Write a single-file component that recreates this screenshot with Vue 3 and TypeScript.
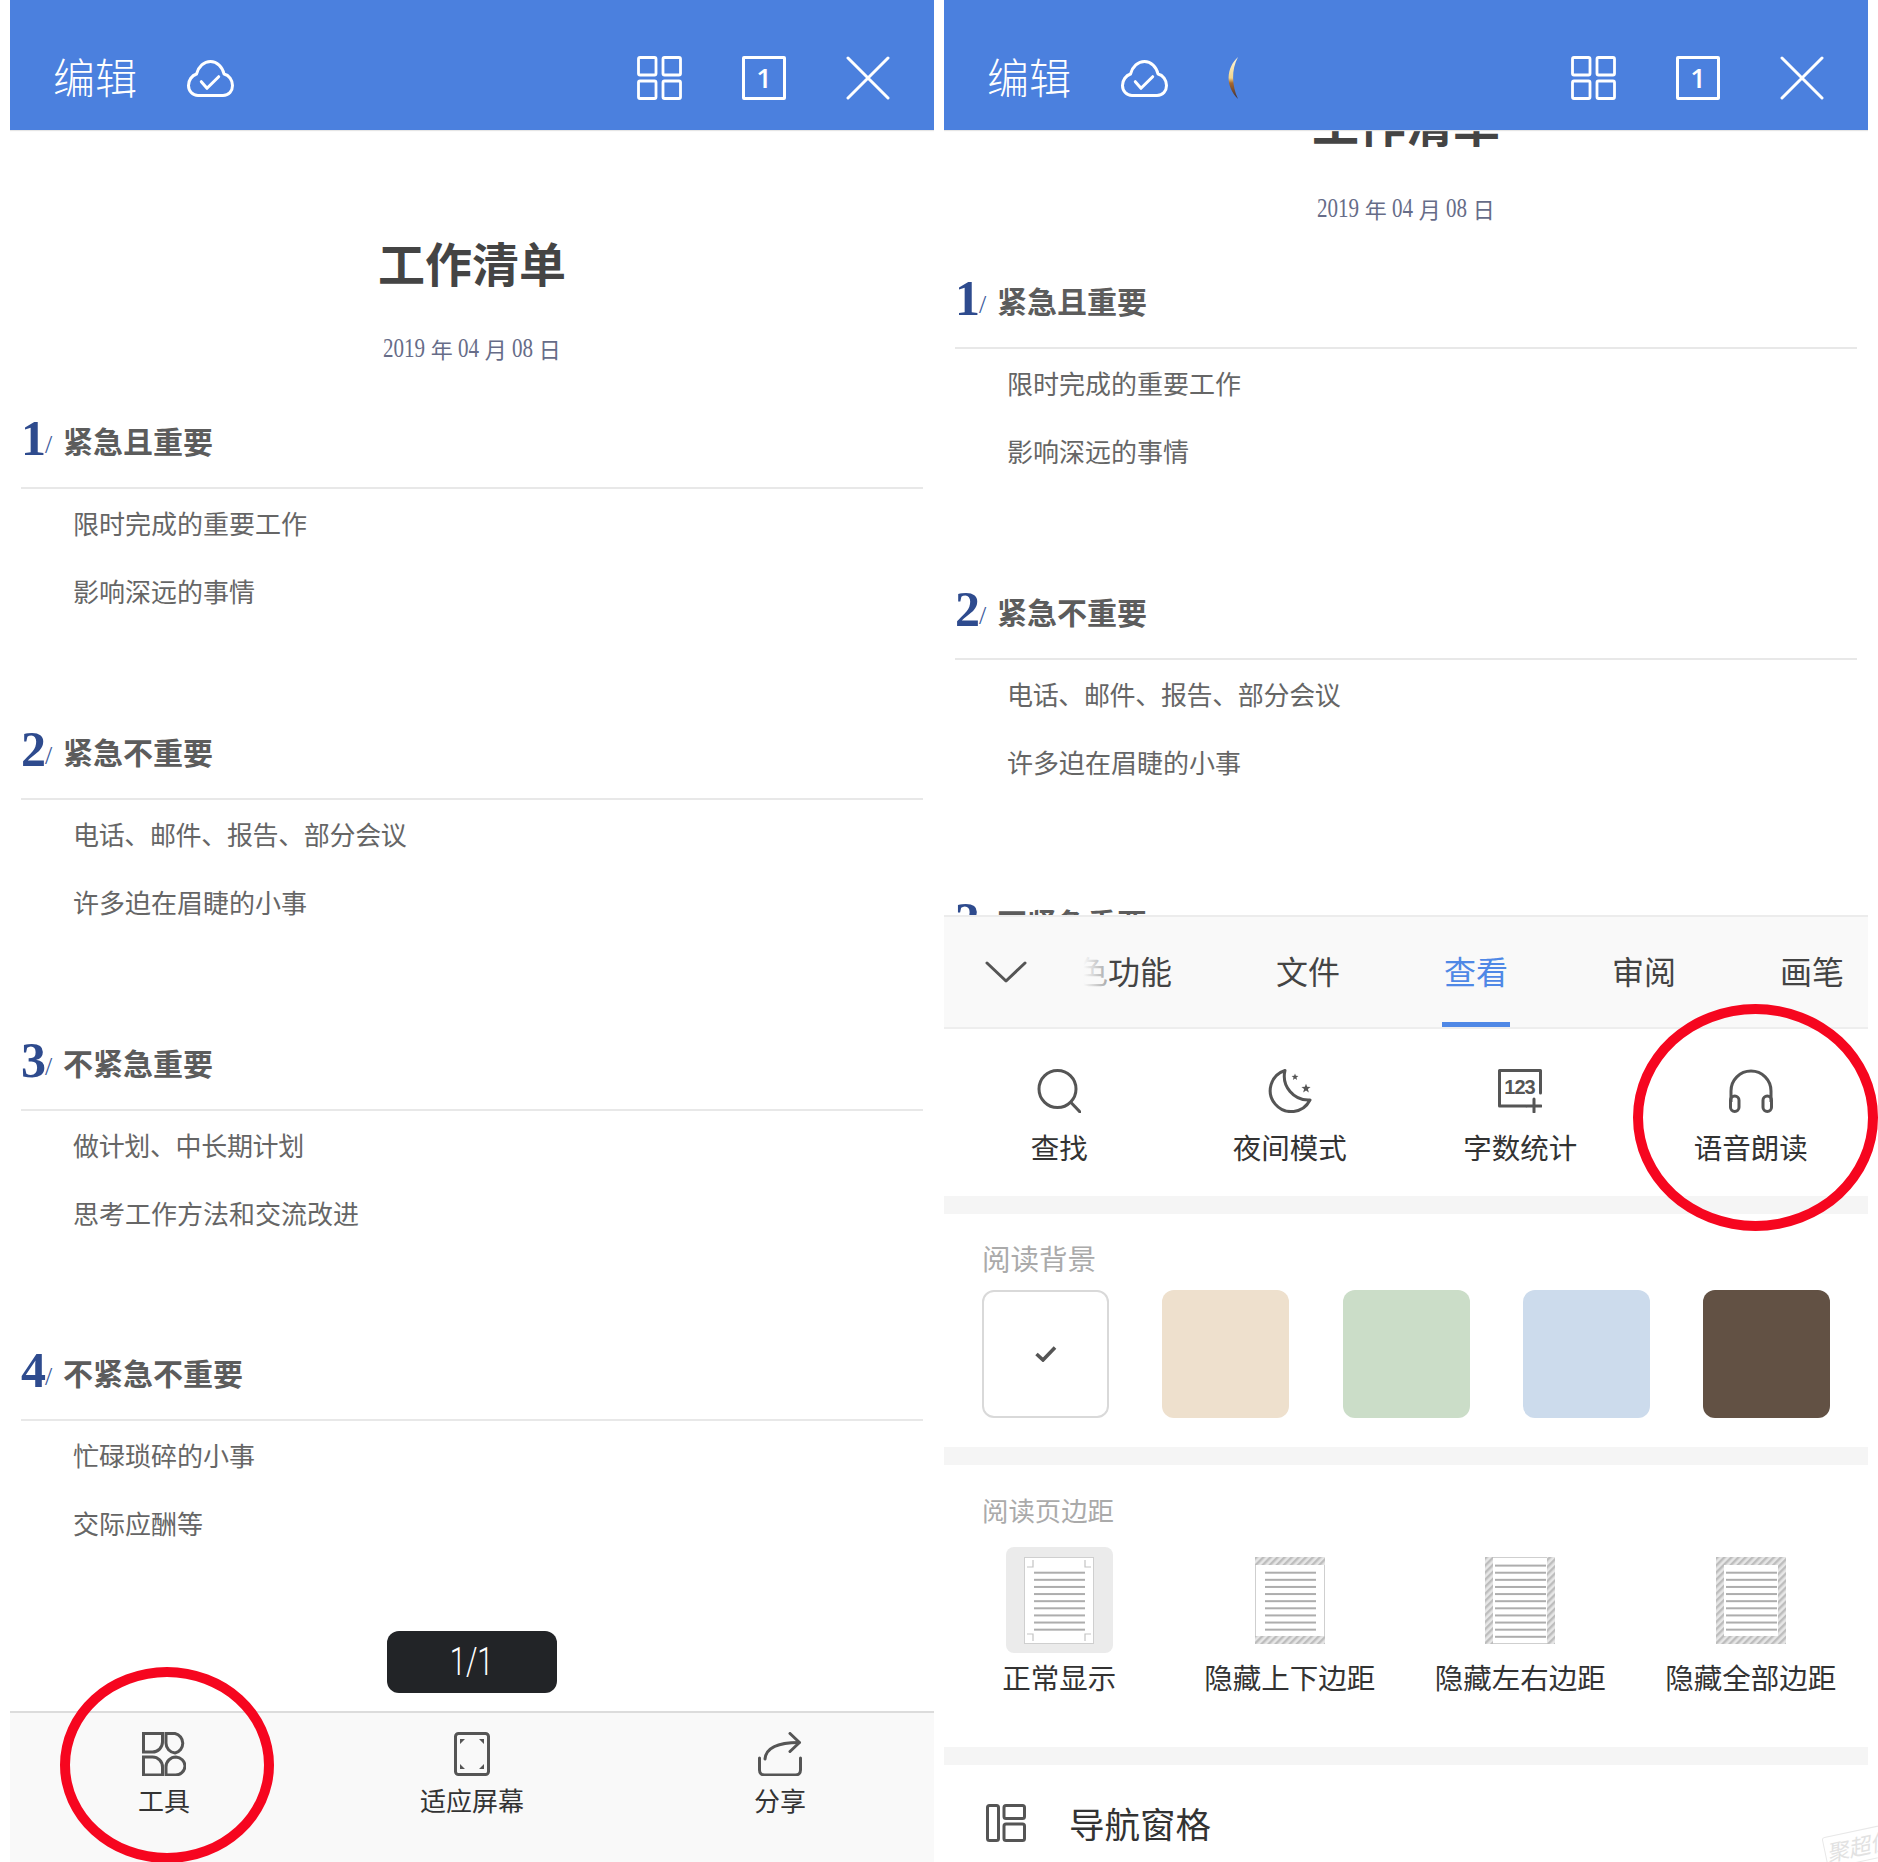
<script setup lang="ts">
type Section = { num: string; title: string; items: string[] };

const sides = ['left', 'right'] as const;

const sections: Section[] = [
  { num: '1', title: '紧急且重要', items: ['限时完成的重要工作', '影响深远的事情'] },
  { num: '2', title: '紧急不重要', items: ['电话、邮件、报告、部分会议', '许多迫在眉睫的小事'] },
  { num: '3', title: '不紧急重要', items: ['做计划、中长期计划', '思考工作方法和交流改进'] },
  { num: '4', title: '不紧急不重要', items: ['忙碌琐碎的小事', '交际应酬等'] },
];

const tabs = ['特色功能', '文件', '查看', '审阅', '画笔'];
const swatches = ['#ffffff', '#eee0cd', '#cbddc8', '#ccdbec', '#625144'];

function star(cx: number, cy: number, r: number): string {
  const pts: string[] = [];
  for (let i = 0; i < 10; i++) {
    const rad = i % 2 === 0 ? r : r * 0.42;
    const a = -Math.PI / 2 + (i * Math.PI) / 5;
    pts.push(`${(cx + rad * Math.cos(a)).toFixed(2)},${(cy + rad * Math.sin(a)).toFixed(2)}`);
  }
  return pts.join(' ');
}

type Margin = { label: string; kind: string; lineCount: number; lineStart: number };
const margins: Margin[] = [
  { label: '正常显示', kind: 'normal', lineCount: 9, lineStart: 14.7 },
  { label: '隐藏上下边距', kind: 'tb', lineCount: 9, lineStart: 14.7 },
  { label: '隐藏左右边距', kind: 'lr', lineCount: 11, lineStart: 7.6 },
  { label: '隐藏全部边距', kind: 'all', lineCount: 9, lineStart: 14.7 },
];
const lineY = (m: Margin, i: number) => m.lineStart + i * 7.12;
</script>

<template>
  <div class="page">
    <section v-for="side in sides" :key="side" class="phone">
      <header class="topbar">
        <div class="topbar-left">
          <span class="edit">编辑</span>
          <svg class="cloud" width="47" height="37" viewBox="0 0 47 37" fill="none" stroke="#fff" stroke-width="3" stroke-linejoin="round" stroke-linecap="round">
            <path d="M11 35.5H36C42 35.5 45.5 31 45.5 25.5C45.5 20 42 15 37 14C35.5 7 30 1.5 23.5 1.5C17 1.5 11.5 6.5 9.5 14C5 15.5 1.5 20 1.5 25.5C1.5 31 5.5 35.5 11 35.5Z" />
            <path d="M14.3 21.7L20 28.3L31.7 16.7" stroke-width="3" />
          </svg>
        </div>
        <svg v-if="side === 'right'" class="crescent" width="14" height="44" viewBox="0 0 14 44">
          <defs>
            <linearGradient id="crescent-fill" x1="0" y1="0" x2="0" y2="1">
              <stop offset="0" stop-color="#fff8dc" />
              <stop offset="0.5" stop-color="#f2d58c" />
              <stop offset="0.62" stop-color="#a8672c" />
              <stop offset="1" stop-color="#3b2f3a" />
            </linearGradient>
          </defs>
          <path d="M13 1C1 12 0 30 13 43C7 30 6 14 13 1Z" fill="url(#crescent-fill)" />
        </svg>
        <div class="topbar-right">
          <svg width="45" height="44" viewBox="0 0 45 44" fill="none" stroke="#fff" stroke-width="2.8" stroke-linejoin="round">
            <rect x="1.5" y="1.5" width="17.5" height="17.5" rx="1.5" />
            <rect x="26" y="1.5" width="17.5" height="17.5" rx="1.5" />
            <rect x="1.5" y="25" width="17.5" height="17.5" rx="1.5" />
            <rect x="26" y="25" width="17.5" height="17.5" rx="1.5" />
          </svg>
          <div class="page-box">1</div>
          <svg width="44" height="44" viewBox="0 0 44 44" fill="none" stroke="#fff" stroke-width="3" stroke-linecap="round">
            <path d="M2 2L42 42M42 2L2 42" />
          </svg>
        </div>
      </header>

      <main class="doc" :class="{ 'doc-scrolled': side === 'right' }">
        <div class="doc-inner">
          <h1 class="doc-title">工作清单</h1>
          <p class="doc-date">
            <span class="d4">2019</span><span>年</span><span class="d2">04</span><span>月</span><span class="d2">08</span><span>日</span>
          </p>
          <article v-for="s in sections" :key="s.num" class="sec">
            <h2 class="sec-head">
              <span class="sec-num">{{ s.num }}</span><span class="sec-slash">/</span>
              <span class="sec-title">{{ s.title }}</span>
            </h2>
            <p
              v-for="item in s.items"
              :key="item"
              class="sec-item"
              :class="{ 'sec-item-tight': item.includes('、') }"
            >{{ item }}</p>
          </article>
        </div>
      </main>

      <template v-if="side === 'left'">
        <div class="pager"><span>1/1</span></div>
        <footer class="bottombar">
          <div class="bar-item">
            <svg width="44" height="44" viewBox="0 0 44 44" fill="none" stroke="#555" stroke-width="3" stroke-linejoin="miter">
              <path d="M1.5 1.5H20.5V10A10 10 0 0 1 10.5 20H1.5Z" />
              <path d="M24 1.5H33A10 10 0 0 1 33 21A10 10 0 0 1 24 11Z" />
              <path d="M1.5 25H10.5A10 10 0 0 1 20.5 35V43H1.5Z" />
              <path d="M24 43V35A10 10 0 0 1 34 25A9.5 9.5 0 0 1 43 34A9.5 9.5 0 0 1 33 43Z" />
            </svg>
            <span>工具</span>
          </div>
          <div class="bar-item">
            <svg width="36" height="44" viewBox="0 0 36 44" fill="none">
              <rect x="1.5" y="1.5" width="33" height="41" rx="3" stroke="#555" stroke-width="3" />
              <path d="M6 7H11L6 12ZM30 7H25L30 12ZM6 37H11L6 32ZM30 37H25L30 32Z" fill="#555" />
            </svg>
            <span>适应屏幕</span>
          </div>
          <div class="bar-item">
            <svg width="44" height="44" viewBox="0 0 44 44" fill="none" stroke="#555" stroke-width="3" stroke-linecap="round" stroke-linejoin="round">
              <path d="M1.5 26V38C1.5 41 3.5 43 6.5 43H37.5C40.5 43 42.5 41 42.5 38V26" />
              <path d="M7 27C8 16 18 10.5 41 10.5" />
              <path d="M32 1.5L41.5 10.5L32 19.5" />
            </svg>
            <span>分享</span>
          </div>
        </footer>
      </template>

      <aside v-else class="panel">
        <div class="tabbar">
          <div class="chevron">
            <svg width="42" height="22" viewBox="0 0 42 22" fill="none" stroke="#555" stroke-width="3" stroke-linecap="round" stroke-linejoin="round">
              <path d="M2 2L21 20L40 2" />
            </svg>
          </div>
          <div class="tab-scroll">
            <div class="tab-row">
              <span v-for="t in tabs" :key="t" class="tab" :class="{ 'tab-active': t === '查看' }">{{ t }}</span>
            </div>
            <div class="tab-fade"></div>
          </div>
        </div>

        <div class="quick">
          <div class="tool">
            <svg width="44" height="44" viewBox="0 0 44 44" fill="none" stroke="#555" stroke-width="3" stroke-linecap="round">
              <circle cx="20.5" cy="20" r="18.5" />
              <path d="M34 33.5L43 43" />
            </svg>
            <span>查找</span>
          </div>
          <div class="tool">
            <svg width="44" height="44" viewBox="0 0 44 44" fill="none" stroke="#555" stroke-width="3" stroke-linejoin="round">
              <path d="M17 1.5A21 21 0 1 0 42 31A24 24 0 0 1 17 1.5Z" />
              <polygon :points="star(27, 8, 3.6)" fill="#555" stroke="none" />
              <polygon :points="star(38, 19.5, 4.8)" fill="#555" stroke="none" />
            </svg>
            <span>夜间模式</span>
          </div>
          <div class="tool">
            <svg width="44" height="44" viewBox="0 0 44 44" fill="none" stroke="#555" stroke-width="3" stroke-linecap="round" stroke-linejoin="round">
              <path d="M42.5 24V1.5H1.5V37H28" />
              <path d="M36 30V43M29 37H43" />
              <text x="21.5" y="25" text-anchor="middle" class="count-text">123</text>
            </svg>
            <span>字数统计</span>
          </div>
          <div class="tool">
            <svg width="44" height="44" viewBox="0 0 44 44" fill="none" stroke="#555" stroke-width="3">
              <path d="M2 33V22A20 20 0 0 1 42 22V33" />
              <rect x="1.5" y="27" width="8.5" height="15.5" rx="4.25" />
              <rect x="34" y="27" width="8.5" height="15.5" rx="4.25" />
            </svg>
            <span>语音朗读</span>
          </div>
        </div>

        <div class="band"></div>

        <div class="bg-block">
          <div class="bg-label">阅读背景</div>
          <div class="swatches">
            <div
              v-for="(c, i) in swatches"
              :key="c"
              class="swatch"
              :class="{ 'swatch-on': i === 0 }"
              :style="{ background: c }"
            >
              <svg v-if="i === 0" width="22" height="16" viewBox="0 0 22 16" fill="none" stroke="#555" stroke-width="3.6">
                <path d="M1.5 8L8 14L20 1.5" />
              </svg>
            </div>
          </div>
        </div>

        <div class="band"></div>

        <div class="margin-block">
          <div class="margin-label">阅读页边距</div>
          <div class="margin-grid">
            <div v-for="m in margins" :key="m.kind" class="margin-item">
              <div class="margin-tile" :class="{ 'margin-tile-on': m.kind === 'normal' }">
                <svg width="70" height="87" viewBox="0 0 70 87">
                  <defs>
                    <pattern :id="`hatch-${m.kind}`" width="5" height="5" patternUnits="userSpaceOnUse" patternTransform="rotate(45)">
                      <rect width="5" height="5" fill="#e6e6e6" />
                      <rect width="2.4" height="5" fill="#bdbdbd" />
                    </pattern>
                  </defs>
                  <rect x="0.5" y="0.5" width="69" height="86" fill="#fff" stroke="#cfcfcf" />
                  <template v-if="m.kind === 'tb' || m.kind === 'all'">
                    <rect x="0" y="0" width="70" height="8" :fill="`url(#hatch-${m.kind})`" />
                    <rect x="0" y="79" width="70" height="8" :fill="`url(#hatch-${m.kind})`" />
                  </template>
                  <template v-if="m.kind === 'lr' || m.kind === 'all'">
                    <rect x="0" y="0" width="8" height="87" :fill="`url(#hatch-${m.kind})`" />
                    <rect x="62" y="0" width="8" height="87" :fill="`url(#hatch-${m.kind})`" />
                  </template>
                  <path
                    v-if="m.kind === 'normal'"
                    d="M3 10H9V3M67 10H61V3M3 77H9V84M67 77H61V84"
                    fill="none"
                    stroke="#c4c4c4"
                    stroke-width="1.2"
                  />
                  <rect
                    v-for="n in m.lineCount"
                    :key="n"
                    x="10"
                    :y="lineY(m, n - 1)"
                    width="51"
                    height="2"
                    fill="#adadad"
                  />
                </svg>
              </div>
              <span>{{ m.label }}</span>
            </div>
          </div>
        </div>

        <div class="band"></div>

        <div class="nav-row">
          <svg width="40" height="38" viewBox="0 0 40 38" fill="none" stroke="#555" stroke-width="3" stroke-linejoin="round">
            <rect x="1.5" y="1.5" width="11" height="35" rx="2" />
            <rect x="18" y="1.5" width="20.5" height="13" rx="2" />
            <rect x="18" y="20" width="20.5" height="16.5" rx="2" />
          </svg>
          <span>导航窗格</span>
        </div>
      </aside>
    </section>

    <div class="ring ring-left"></div>
    <div class="ring ring-right"></div>
    <div class="watermark">聚超值</div>
  </div>
</template>

<style>
html,
body {
  margin: 0;
  background: #fff;
  overflow: hidden;
}
</style>

<style scoped>
.page {
  position: relative;
  width: 1878px;
  height: 1862px;
  overflow: hidden;
  background: #fff;
  display: flex;
  gap: 10px;
  padding-left: 10px;
  box-sizing: border-box;
  font-family: "Noto Sans CJK SC", "Noto Sans", sans-serif;
  color: #333;
}
.phone {
  position: relative;
  width: 924px;
  height: 1862px;
  display: flex;
  flex-direction: column;
  flex: none;
  overflow: hidden;
  background: #fff;
}

/* top bar */
.topbar {
  position: relative;
  z-index: 2;
  flex: none;
  height: 130px;
  box-sizing: border-box;
  padding: 56px 44px 30px 43px;
  background: #4b80de;
  display: flex;
  align-items: center;
  justify-content: space-between;
  box-shadow: 0 1px 1px #e6e6e6;
}
.topbar-left {
  display: flex;
  align-items: center;
  gap: 50px;
}
.edit {
  color: #fff;
  font-size: 42px;
  font-weight: 300;
  line-height: 44px;
  margin-bottom: 4px;
}
.cloud {
  margin-top: 1px;
}
.crescent {
  position: absolute;
  left: 281px;
  top: 56px;
}
.topbar-right {
  display: flex;
  align-items: center;
  gap: 60px;
}
.page-box {
  width: 44px;
  height: 44px;
  box-sizing: border-box;
  border: 3px solid #fff;
  border-radius: 2px;
  color: #fff;
  font-family: "Open Sans", sans-serif;
  font-weight: 600;
  font-size: 27px;
  line-height: 38px;
  text-align: center;
}

/* document */
.doc {
  flex: 1;
  min-height: 0;
  overflow: hidden;
}
.doc-inner {
  padding: 102px 11px 0;
}
.doc-scrolled .doc-inner {
  margin-top: -140px;
}
.doc-title {
  margin: 0;
  font-size: 47px;
  line-height: 60px;
  font-weight: 700;
  color: #444;
  text-align: center;
}
.doc-date {
  margin: 41px 0 54px;
  height: 30px;
  display: flex;
  justify-content: center;
  align-items: center;
  gap: 5.5px;
  font-size: 22px;
  line-height: 30px;
  color: #666c88;
}
.d4,
.d2 {
  display: inline-block;
  font-family: "Liberation Serif", serif;
  font-size: 27px;
  transform: scaleX(0.78);
}
.d4 {
  margin: 0 -6px;
}
.d2 {
  margin: 0 -3px;
}
.sec {
  height: 310.8px;
}
.sec-head {
  margin: 0;
  height: 72px;
  box-sizing: border-box;
  padding: 0 0 22px 0;
  border-bottom: 2px solid #e8e8e8;
  display: flex;
  align-items: center;
}
.sec-num {
  font-family: "Liberation Serif", serif;
  font-weight: 700;
  font-size: 50px;
  line-height: 50px;
  color: #2e4b8e;
  width: 24px;
  margin-top: -6px;
}
.sec-slash {
  font-family: "Liberation Serif", serif;
  font-weight: 400;
  font-size: 26px;
  line-height: 26px;
  color: #3d5a9c;
  width: 18px;
  margin-top: 8px;
}
.sec-title {
  font-size: 30px;
  font-weight: 700;
  line-height: 40px;
  margin-top: -2px;
  color: #5c5c5c;
}
.sec-item {
  margin: 0;
  padding-left: 52px;
  font-size: 26px;
  line-height: 68px;
  color: #666;
}
.sec-item-tight {
  letter-spacing: -0.35px;
}

/* left bottom */
.pager {
  position: absolute;
  z-index: 1;
  left: 377px;
  top: 1631px;
  width: 170px;
  height: 62px;
  border-radius: 12px;
  background: #222427;
  color: #fff;
  font-family: "Roboto", sans-serif;
  font-weight: 300;
  font-size: 38px;
  line-height: 62px;
  text-align: center;
}
.pager span {
  display: inline-block;
  transform: scaleX(0.76);
}
.bottombar {
  flex: none;
  height: 151px;
  box-sizing: border-box;
  border-top: 2px solid #dcdcdc;
  background: #f9f9f9;
  padding-top: 19px;
  display: grid;
  grid-template-columns: repeat(3, 1fr);
}
.bar-item {
  display: flex;
  flex-direction: column;
  align-items: center;
  font-size: 26px;
  line-height: 36px;
  color: #333;
}
.bar-item span {
  margin-top: 6px;
}

/* right panel */
.panel {
  flex: none;
  background: #fff;
  display: flex;
  flex-direction: column;
  height: 947px;
}
.tabbar {
  flex: none;
  height: 114px;
  box-sizing: border-box;
  border-top: 2px solid #ececec;
  border-bottom: 2px solid #eeeeee;
  background: #f9f9f9;
  display: flex;
}
.chevron {
  width: 138px;
  flex: none;
  display: flex;
  align-items: center;
  padding-left: 41px;
  box-sizing: border-box;
}
.tab-scroll {
  position: relative;
  flex: 1;
  min-width: 0;
  overflow: hidden;
}
.tab-row {
  margin-left: -38px;
  height: 100%;
  display: flex;
  gap: 104px;
}
.tab {
  position: relative;
  flex: none;
  font-size: 32px;
  line-height: 106px;
  color: #444;
  white-space: nowrap;
}
.tab-active {
  color: #4f88e6;
}
.tab-active::after {
  content: "";
  position: absolute;
  left: -2px;
  right: -2px;
  bottom: 0;
  height: 5px;
  background: #4f88e6;
}
.tab-fade {
  position: absolute;
  left: 0;
  top: 0;
  bottom: 0;
  width: 26px;
  background: linear-gradient(to right, #f9f9f9 5%, rgba(249, 249, 249, 0.55));
}
.quick {
  flex: none;
  height: 167px;
  box-sizing: border-box;
  padding: 40px 2px 0 0;
  display: grid;
  grid-template-columns: repeat(4, 1fr);
  background: #fff;
}
.tool {
  display: flex;
  flex-direction: column;
  align-items: center;
  font-size: 28.5px;
  line-height: 40px;
  color: #333;
}
.tool span {
  margin-top: 14px;
}
.count-text {
  font-family: "Liberation Sans", sans-serif;
  font-size: 20px;
  font-weight: 700;
  letter-spacing: -1px;
  fill: #555;
  stroke: none;
}
.band {
  flex: none;
  height: 18px;
  background: #f5f5f5;
}
.bg-block {
  flex: none;
  height: 233px;
  box-sizing: border-box;
  padding: 25px 0 0 38px;
}
.bg-label {
  font-size: 28.5px;
  line-height: 38px;
  color: #aaa;
}
.swatches {
  margin-top: 13px;
  display: grid;
  grid-template-columns: repeat(5, 127px);
  gap: 53.25px;
}
.swatch {
  height: 128px;
  border-radius: 12px;
  box-sizing: border-box;
  display: flex;
  align-items: center;
  justify-content: center;
}
.swatch-on {
  border: 2px solid #d9d9d9;
}
.margin-block {
  flex: none;
  height: 282px;
  box-sizing: border-box;
  padding: 27px 2px 0 0;
}
.margin-label {
  padding-left: 38px;
  font-size: 26.4px;
  line-height: 36px;
  color: #aaa;
}
.margin-grid {
  margin-top: 19px;
  display: grid;
  grid-template-columns: repeat(4, 1fr);
}
.margin-item {
  display: flex;
  flex-direction: column;
  align-items: center;
  font-size: 28.5px;
  line-height: 40px;
  color: #333;
}
.margin-item span {
  margin-top: 4px;
}
.margin-tile {
  width: 107px;
  height: 106px;
  border-radius: 8px;
  display: flex;
  align-items: center;
  justify-content: center;
}
.margin-tile-on {
  background: #ebebeb;
}
.nav-row {
  flex: 1;
  display: flex;
  align-items: center;
  padding: 18px 0 0 42px;
  gap: 43px;
  font-size: 35.5px;
  color: #333;
  background: #fff;
}

/* annotations over the screenshot */
.ring {
  position: absolute;
  z-index: 5;
  box-sizing: border-box;
  border: 10px solid #f6061f;
  border-radius: 50%;
  pointer-events: none;
}
.ring-left {
  left: 60px;
  top: 1667px;
  width: 214px;
  height: 196px;
}
.ring-right {
  left: 1633px;
  top: 1004px;
  width: 245px;
  height: 227px;
}
.watermark {
  position: absolute;
  z-index: 4;
  left: 1824px;
  top: 1830px;
  width: 70px;
  height: 32px;
  box-sizing: border-box;
  border: 1.5px solid #e8e8e8;
  border-radius: 3px;
  font-size: 22px;
  line-height: 28px;
  font-style: italic;
  color: #e2e2e2;
  text-align: center;
  white-space: nowrap;
  overflow: hidden;
  transform: rotate(-12deg);
}
</style>
